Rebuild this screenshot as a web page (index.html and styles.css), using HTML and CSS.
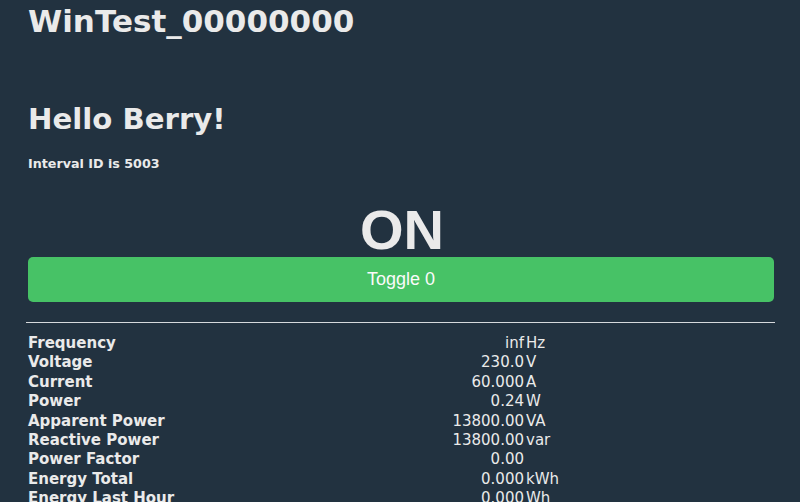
FILE: index.html
```html
<!DOCTYPE html>
<html>
<head>
<meta charset="utf-8">
<title>WinTest_00000000</title>
<link rel="stylesheet" href="styles.css">
</head>
<body>
<div class="page">
  <h1 class="device">WinTest_00000000</h1>
  <h2 class="hello">Hello Berry!</h2>
  <p class="interval">Interval ID is 5003</p>
  <div class="state">ON</div>
  <button class="toggle">Toggle 0</button>
  <hr class="rule">
  <div class="sensors">
    <div class="label">Frequency</div><div class="value">inf</div><div class="unit">Hz</div>
    <div class="label">Voltage</div><div class="value">230.0</div><div class="unit">V</div>
    <div class="label">Current</div><div class="value">60.000</div><div class="unit">A</div>
    <div class="label">Power</div><div class="value">0.24</div><div class="unit">W</div>
    <div class="label">Apparent Power</div><div class="value">13800.00</div><div class="unit">VA</div>
    <div class="label">Reactive Power</div><div class="value">13800.00</div><div class="unit">var</div>
    <div class="label">Power Factor</div><div class="value">0.00</div><div class="unit"></div>
    <div class="label">Energy Total</div><div class="value">0.000</div><div class="unit">kWh</div>
    <div class="label">Energy Last Hour</div><div class="value">0.000</div><div class="unit">Wh</div>
  </div>
</div>
</body>
</html>
```
FILE: styles.css
```css
html, body {
  margin: 0;
  padding: 0;
  background: #223240;
}
body {
  color: #eaeaea;
  font-family: "DejaVu Sans", Verdana, sans-serif;
  overflow: hidden;
}
.page {
  margin: 0 26px 0 28px;
  padding-top: 3px;
}
.device {
  margin: 0;
  font-size: 31px;
  font-weight: bold;
  line-height: 36px;
}
.hello {
  margin: 63px 0 0;
  font-size: 29.2px;
  font-weight: bold;
  line-height: 34px;
}
.interval {
  margin: 20px 0 0;
  font-size: 12.7px;
  font-weight: bold;
  line-height: 15px;
}
.state {
  margin-top: 32px;
  text-align: center;
  font-family: "Liberation Sans", Arial, sans-serif;
  font-weight: bold;
  font-size: 56px;
  line-height: 54px;
  height: 54px;
  margin-left: 2px;
}
.toggle {
  display: block;
  width: 100%;
  height: 45px;
  margin: 0;
  border: 0;
  border-radius: 5px;
  background: #47c266;
  color: #fafafa;
  font-family: "Liberation Sans", Arial, sans-serif;
  font-size: 18px;
  line-height: 45px;
  padding: 0;
  text-align: center;
}
.rule {
  margin: 20px -1px 0 -2px;
  height: 1px;
  border: 0;
  background: #d6d9dc;
}
.sensors {
  margin-top: 11px;
  display: grid;
  grid-template-columns: 400px 96px 1fr;
  grid-auto-rows: 19.4px;
  font-size: 15px;
  line-height: 19.4px;
}
.label {
  font-weight: bold;
  white-space: nowrap;
}
.value {
  text-align: right;
  white-space: nowrap;
}
.unit {
  padding-left: 2px;
  white-space: nowrap;
}
```
